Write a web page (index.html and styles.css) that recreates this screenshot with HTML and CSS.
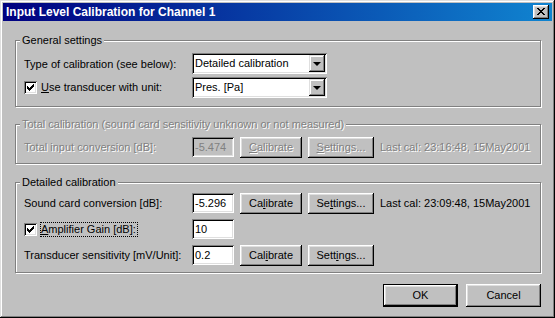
FILE: index.html
```html
<!DOCTYPE html>
<html lang="en">
<head>
  <meta charset="UTF-8" />
  <title>Input Level Calibration for Channel 1</title>
  <link rel="stylesheet" href="styles.css">
</head>
<body>

  <div class="window">
    <div class="titlebar">
      <span class="title">Input Level Calibration for Channel 1</span>
      <span class="close-btn">
        <svg width="8" height="7" viewBox="0 0 8 7" shape-rendering="crispEdges">
          <path d="M0 0h2v1H0z M6 0h2v1H6z M1 1h2v1H1z M5 1h2v1H5z M2 2h4v1H2z M3 3h2v1H3z M2 4h4v1H2z M1 5h2v1H1z M5 5h2v1H5z M0 6h2v1H0z M6 6h2v1H6z" fill="#000"/>
        </svg>
      </span>
    </div>

    <div class="content">

      <fieldset class="group group-general">
        <legend>General settings</legend>
        <div class="rows">
          <div class="row">
            <div class="label-cell">Type of calibration (see below):</div>
            <div class="combo">
              <span class="combo-text">Detailed calibration</span>
              <span class="combo-btn"><span class="arrow"></span></span>
            </div>
          </div>
          <div class="row">
            <div class="label-cell">
              <span class="checkbox checked"></span>
              <span class="check-label"><u>U</u>se transducer with unit:</span>
            </div>
            <div class="combo">
              <span class="combo-text">Pres. [Pa]</span>
              <span class="combo-btn"><span class="arrow"></span></span>
            </div>
          </div>
        </div>
      </fieldset>

      <fieldset class="group group-total disabled">
        <legend>Total calibration (sound card sensitivity unknown or not measured)</legend>
        <div class="rows">
          <div class="row">
            <div class="label-cell">Total input conversion [dB]:</div>
            <div class="textbox">-5.474</div>
            <div class="btn"><u>C</u>alibrate</div>
            <div class="btn btn-wide"><u>S</u>ettings...</div>
            <div class="last-cal">Last cal: 23:16:48, 15May2001</div>
          </div>
        </div>
      </fieldset>

      <fieldset class="group group-detail">
        <legend>Detailed calibration</legend>
        <div class="rows">
          <div class="row">
            <div class="label-cell">Sound card conversion [dB]:</div>
            <div class="textbox">-5.296</div>
            <div class="btn">Ca<u>l</u>ibrate</div>
            <div class="btn btn-wide">Se<u>t</u>tings...</div>
            <div class="last-cal">Last cal: 23:09:48, 15May2001</div>
          </div>
          <div class="row">
            <div class="label-cell">
              <span class="checkbox checked"></span>
              <span class="check-label focused"><u>A</u>mplifier Gain [dB]:</span>
            </div>
            <div class="textbox">10</div>
          </div>
          <div class="row">
            <div class="label-cell">Transducer sensitivity [mV/Unit]:</div>
            <div class="textbox">0.2</div>
            <div class="btn">Cal<u>i</u>brate</div>
            <div class="btn btn-wide">Sett<u>i</u>ngs...</div>
          </div>
        </div>
      </fieldset>

      <div class="actions">
        <div class="btn btn-dialog btn-default">OK</div>
        <div class="btn btn-dialog">Cancel</div>
      </div>

    </div>
  </div>

</body>
</html>
```

FILE: styles.css
```css
body {
  margin: 0;
  background: #c0c0c0;
  font-family: "Liberation Sans", Arial, sans-serif;
  font-size: 11px;
  color: #000;
}

.window {
  width: 555px;
  height: 318px;
  box-sizing: border-box;
  padding: 3px;
  background: #c0c0c0;
  box-shadow: inset -1px -1px #000, inset 1px 1px #dfdfdf, inset -2px -2px #808080, inset 2px 2px #fff;
  display: flex;
  flex-direction: column;
}

/* title bar */
.titlebar {
  height: 18px;
  background: linear-gradient(to right, #000080, #1084d0);
  display: flex;
  align-items: center;
  justify-content: space-between;
  padding: 0 3px 0 3px;
}

.title {
  color: #fff;
  font-weight: bold;
  font-size: 12px;
  line-height: 18px;
}

.close-btn {
  width: 16px;
  height: 14px;
  box-sizing: border-box;
  background: #c0c0c0;
  box-shadow: inset -1px -1px #000, inset 1px 1px #fff, inset -2px -2px #808080, inset 2px 2px #dfdfdf;
  display: flex;
  align-items: center;
  justify-content: center;
}

.close-btn svg {
  display: block;
  margin: 0 1px 1px 0;
}

/* body */
.content {
  flex: 1;
  padding: 13px 11px 0 12px;
  display: flex;
  flex-direction: column;
}

.group {
  margin: 0;
  padding: 0;
  min-width: 0;
  border: 1px solid #808080;
  box-shadow: inset 1px 1px #fff, 1px 1px #fff;
}

.group legend {
  margin-left: 4px;
  padding: 0 2px;
  line-height: 13px;
  background: #c0c0c0;
}

.group-general .rows {
  padding: 6px 0 8px 8px;
}

.group-total {
  margin-top: 11px;
}

.group-total .rows {
  padding: 6px 0 6px 8px;
}

.group-detail {
  margin-top: 12px;
}

.group-detail .rows {
  padding: 4px 0 7px 8px;
  gap: 6px;
}

.rows {
  display: flex;
  flex-direction: column;
  gap: 3px;
}

.row {
  display: flex;
  align-items: center;
  height: 21px;
}

.group-total .row,
.group-detail .row {
  height: 20px;
}

.label-cell {
  width: 168px;
  flex-shrink: 0;
  display: flex;
  align-items: center;
  white-space: nowrap;
}

/* combo box */
.combo {
  width: 135px;
  height: 21px;
  box-sizing: border-box;
  background: #fff;
  box-shadow: inset 1px 1px #808080, inset -1px -1px #fff, inset 2px 2px #000, inset -2px -2px #dfdfdf;
  display: flex;
  align-items: center;
  padding: 2px;
}

.combo-text {
  flex: 1;
  padding-left: 1px;
  line-height: 17px;
}

.combo-btn {
  width: 16px;
  height: 17px;
  box-sizing: border-box;
  background: #c0c0c0;
  box-shadow: inset -1px -1px #000, inset 1px 1px #dfdfdf, inset -2px -2px #808080, inset 2px 2px #fff;
  display: flex;
  align-items: center;
  justify-content: center;
}

.arrow {
  width: 0;
  height: 0;
  border-left: 4px solid transparent;
  border-right: 4px solid transparent;
  border-top: 4px solid #000;
  margin: 0 1px 0 0;
}

/* checkbox */
.checkbox {
  width: 13px;
  height: 13px;
  flex-shrink: 0;
  box-sizing: border-box;
  background: #fff;
  box-shadow: inset 1px 1px #808080, inset -1px -1px #fff, inset 2px 2px #000, inset -2px -2px #dfdfdf;
  margin-right: 3px;
  position: relative;
}

.checkbox.checked::after {
  content: "";
  position: absolute;
  left: 3px;
  top: 3px;
  width: 7px;
  height: 7px;
  background:
    linear-gradient(#000, #000) 6px 0 / 1px 3px no-repeat,
    linear-gradient(#000, #000) 5px 1px / 1px 3px no-repeat,
    linear-gradient(#000, #000) 4px 2px / 1px 3px no-repeat,
    linear-gradient(#000, #000) 3px 3px / 1px 3px no-repeat,
    linear-gradient(#000, #000) 2px 4px / 1px 3px no-repeat,
    linear-gradient(#000, #000) 1px 3px / 1px 3px no-repeat,
    linear-gradient(#000, #000) 0 2px / 1px 3px no-repeat;
}

.check-label {
  border: 1px dotted transparent;
  padding: 0 1px 0 0;
  line-height: 13px;
}

.check-label.focused {
  border-color: #000;
}

/* text box */
.textbox {
  width: 42px;
  height: 20px;
  box-sizing: border-box;
  flex-shrink: 0;
  background: #fff;
  box-shadow: inset 1px 1px #808080, inset -1px -1px #fff, inset 2px 2px #000, inset -2px -2px #dfdfdf;
  padding: 0 2px 0 3px;
  line-height: 20px;
}

/* buttons */
.btn {
  width: 62px;
  height: 21px;
  box-sizing: border-box;
  flex-shrink: 0;
  margin-left: 6px;
  background: #c0c0c0;
  box-shadow: inset -1px -1px #000, inset 1px 1px #fff, inset -2px -2px #808080, inset 2px 2px #dfdfdf;
  text-align: center;
  line-height: 20px;
}

.btn-wide {
  width: 66px;
}

.last-cal {
  margin-left: 6px;
  white-space: nowrap;
}

.actions {
  display: flex;
  justify-content: flex-end;
  gap: 8px;
  margin-top: 11px;
}

.btn-dialog {
  width: 75px;
  height: 23px;
  margin-left: 0;
  line-height: 23px;
}

.btn-default {
  box-shadow: inset 0 0 0 1px #000, inset -2px -2px #000, inset 2px 2px #fff, inset -3px -3px #808080, inset 3px 3px #dfdfdf;
}

/* disabled group */
.disabled,
.disabled .btn,
.disabled .textbox {
  color: #808080;
}

.disabled legend,
.disabled .label-cell,
.disabled .btn,
.disabled .last-cal {
  text-shadow: 1px 1px #fff;
}

.disabled .textbox {
  background: #c0c0c0;
}
```
